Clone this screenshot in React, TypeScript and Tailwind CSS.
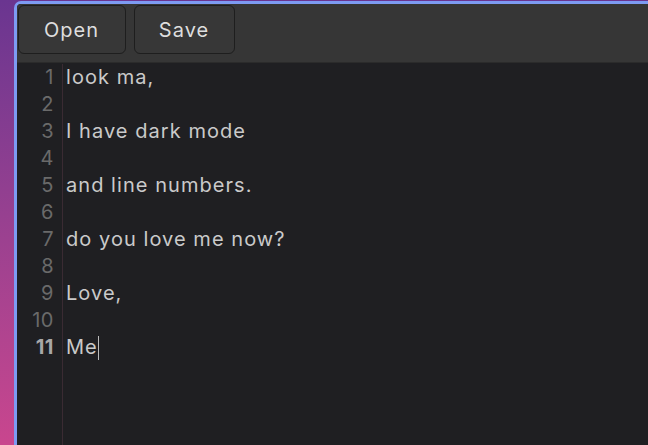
import React from "react";

const lines = [
  "look ma,",
  "",
  "I have dark mode",
  "",
  "and line numbers.",
  "",
  "do you love me now?",
  "",
  "Love,",
  "",
  "Me",
];

export default function App() {
  return (
    <div
      className="w-[648px] h-[445px] overflow-hidden flex pl-[14px] pt-[1px] bg-gradient-to-b from-[#6a3590] to-[#c9468e]"
      style={{ fontFamily: "Inter, 'Noto Sans', sans-serif" }}
    >
      <div className="flex-1 flex flex-col border-l-[3px] border-t-[3px] border-[#7d9bf3] rounded-tl-[7px] overflow-hidden bg-[#1f1f22]">
        <div className="h-[59px] shrink-0 bg-[#363636] border-b border-[#2b2b2b] flex items-start gap-[8px] pt-[1px] pl-[0.5px]">
          <button className="h-[49px] w-[108px] rounded-[6px] border border-[#1e1e1e] bg-[#373737] text-[20px] tracking-[1px] text-[#dedede] flex items-center justify-center">
            Open
          </button>
          <button className="h-[49px] w-[101px] rounded-[6px] border border-[#1e1e1e] bg-[#373737] text-[20px] tracking-[1px] text-[#dedede] flex items-center justify-center">
            Save
          </button>
        </div>
        <div className="flex-1 flex pt-[1px]">
          <div className="w-[46px] shrink-0 border-r border-[#3a2b33] flex flex-col text-[20px] leading-[27px] text-right pr-[8px] text-[#6a6a6a] tracking-[0.5px]">
            {lines.map((_, i) => (
              <div
                key={i}
                className={i === 10 ? "font-bold text-[#a8a8a8]" : ""}
              >
                {i + 1}
              </div>
            ))}
          </div>
          <div className="flex-1 flex flex-col text-[20px] leading-[27px] pl-[3px] text-[#cacaca] tracking-[1.05px]">
            {lines.map((l, i) => (
              <div key={i} className="h-[27px] flex items-center">
                <span>{l}</span>
                {i === 10 && (
                  <span className="inline-block w-[1px] h-[24px] bg-[#bbbbbb]" />
                )}
              </div>
            ))}
          </div>
        </div>
      </div>
    </div>
  );
}
